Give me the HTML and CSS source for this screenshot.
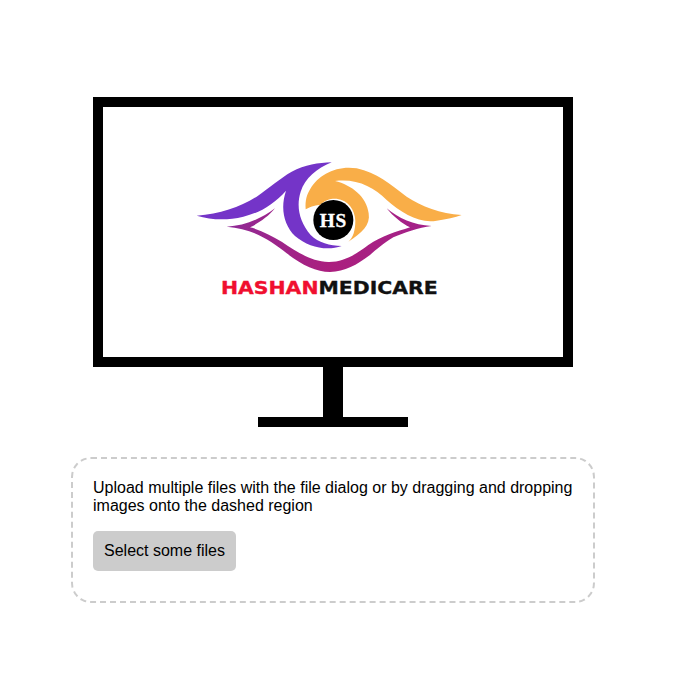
FILE: index.html
```html
<!DOCTYPE html>
<html lang="en">
<head>
    <meta charset="UTF-8">
    <meta name="viewport" content="width=device-width, initial-scale=1.0">
    <title>Image Upload</title>
    <link rel="stylesheet" href="styles.css">
</head>
<body>
    <div class="page">
        <div class="monitor">
            <div class="screen">
                <svg class="logo" viewBox="-231 -129 1380 750" role="img" aria-label="Hashan Medicare logo">
                    <defs>
                        <linearGradient id="lid" x1="0" y1="0" x2="1" y2="0">
                            <stop offset="0" stop-color="#8f2a96"/>
                            <stop offset="0.5" stop-color="#ab1f7e"/>
                            <stop offset="1" stop-color="#a3228a"/>
                        </linearGradient>
                    </defs>
                    <path class="purple" d="M50 197 C120 192 180 172 230 140 C270 112 300 85 335 65 C375 45 415 38 455 37 C410 55 375 85 362 125 C348 170 358 215 392 255 C415 278 450 288 485 288 C440 304 385 292 345 258 C312 225 300 175 318 122 C280 165 235 190 190 200 C140 212 95 210 50 197 Z"/>
                    <path class="orange" d="M505 275 C545 250 572 225 566 190 C560 140 515 105 465 93 C530 85 580 110 620 150 C665 190 720 222 770 212 C800 208 825 202 845 195 C780 190 725 170 680 140 C630 102 590 68 530 55 C470 45 415 75 392 115 C380 135 375 150 377 178 C395 168 410 165 420 165 C435 150 450 145 470 146 C505 150 525 180 526 212 C526 240 520 262 505 275 Z"/>
                    <path fill="url(#lid)" d="M140 230 C195 228 245 205 285 175 C265 200 235 220 210 232 C245 240 275 258 305 275 C350 305 395 335 445 336 C490 337 530 312 565 285 C605 258 650 245 690 232 C665 220 640 200 620 175 C655 205 700 225 755 228 C715 232 675 248 640 262 C610 280 590 298 570 315 C530 345 495 365 450 366 C410 366 365 345 320 310 C270 270 215 235 140 230 Z"/>
                    <circle cx="460" cy="210" r="60" fill="#000"/>
                    <text class="logo-hs" x="460" y="230" text-anchor="middle">HS</text>
                    <text class="logo-name" x="123" y="432" textLength="650" lengthAdjust="spacingAndGlyphs"><tspan class="logo-red">HASHAN</tspan>MEDICARE</text>
                </svg>
            </div>
        </div>
        <div class="stand"></div>
        <div class="stand-base"></div>

        <div class="drop-area">
            <p class="drop-text">Upload multiple files with the file dialog or by dragging and dropping images onto the dashed region</p>
            <label class="upload-btn" for="file-input">Select some files</label>
            <input type="file" id="file-input" class="file-input" multiple accept="image/*">
        </div>
    </div>
</body>
</html>
```

FILE: styles.css
```css
body {
    font-family: 'Liberation Sans', Arial, sans-serif;
    background-color: #fff;
    margin: 0;
}

.page {
    display: flex;
    flex-direction: column;
    align-items: center;
    width: 524px;
    margin-left: 71px;
    padding-top: 97px;
}

.monitor {
    width: 480px;
    height: 270px;
    border: 10px solid #000;
    box-sizing: border-box;
}

.screen {
    height: 100%;
}

.logo {
    display: block;
    width: 460px;
    height: 250px;
}

.purple {
    fill: #7434c8;
}

.orange {
    fill: #f9ae48;
}

.logo-hs {
    font-family: 'Liberation Serif', 'Times New Roman', serif;
    font-size: 58px;
    font-weight: bold;
    letter-spacing: 2px;
    fill: #fff;
    stroke: #fff;
    stroke-width: 1px;
}

.logo-name {
    font-family: 'DejaVu Sans', Verdana, sans-serif;
    font-size: 51px;
    font-weight: bold;
    fill: #111;
    stroke: #111;
    stroke-width: 1px;
}

.logo-red {
    fill: #f00f2f;
    stroke: #f00f2f;
}

.stand {
    width: 20px;
    height: 50px;
    background-color: #000;
}

.stand-base {
    width: 150px;
    height: 10px;
    margin-right: 1px;
    background-color: #000;
}

.drop-area {
    width: 100%;
    margin-top: 30px;
    padding: 20px;
    border: 2px dashed #ccc;
    border-radius: 20px;
    box-sizing: border-box;
}

.drop-text {
    margin: 0 0 16px;
    font-size: 16px;
    line-height: 18px;
    color: #000;
}

.upload-btn {
    display: inline-block;
    padding: 11px;
    margin-bottom: 10px;
    background-color: #ccc;
    border-radius: 5px;
    cursor: pointer;
    font-size: 16px;
    line-height: 18px;
}

.file-input {
    display: none;
}
```
